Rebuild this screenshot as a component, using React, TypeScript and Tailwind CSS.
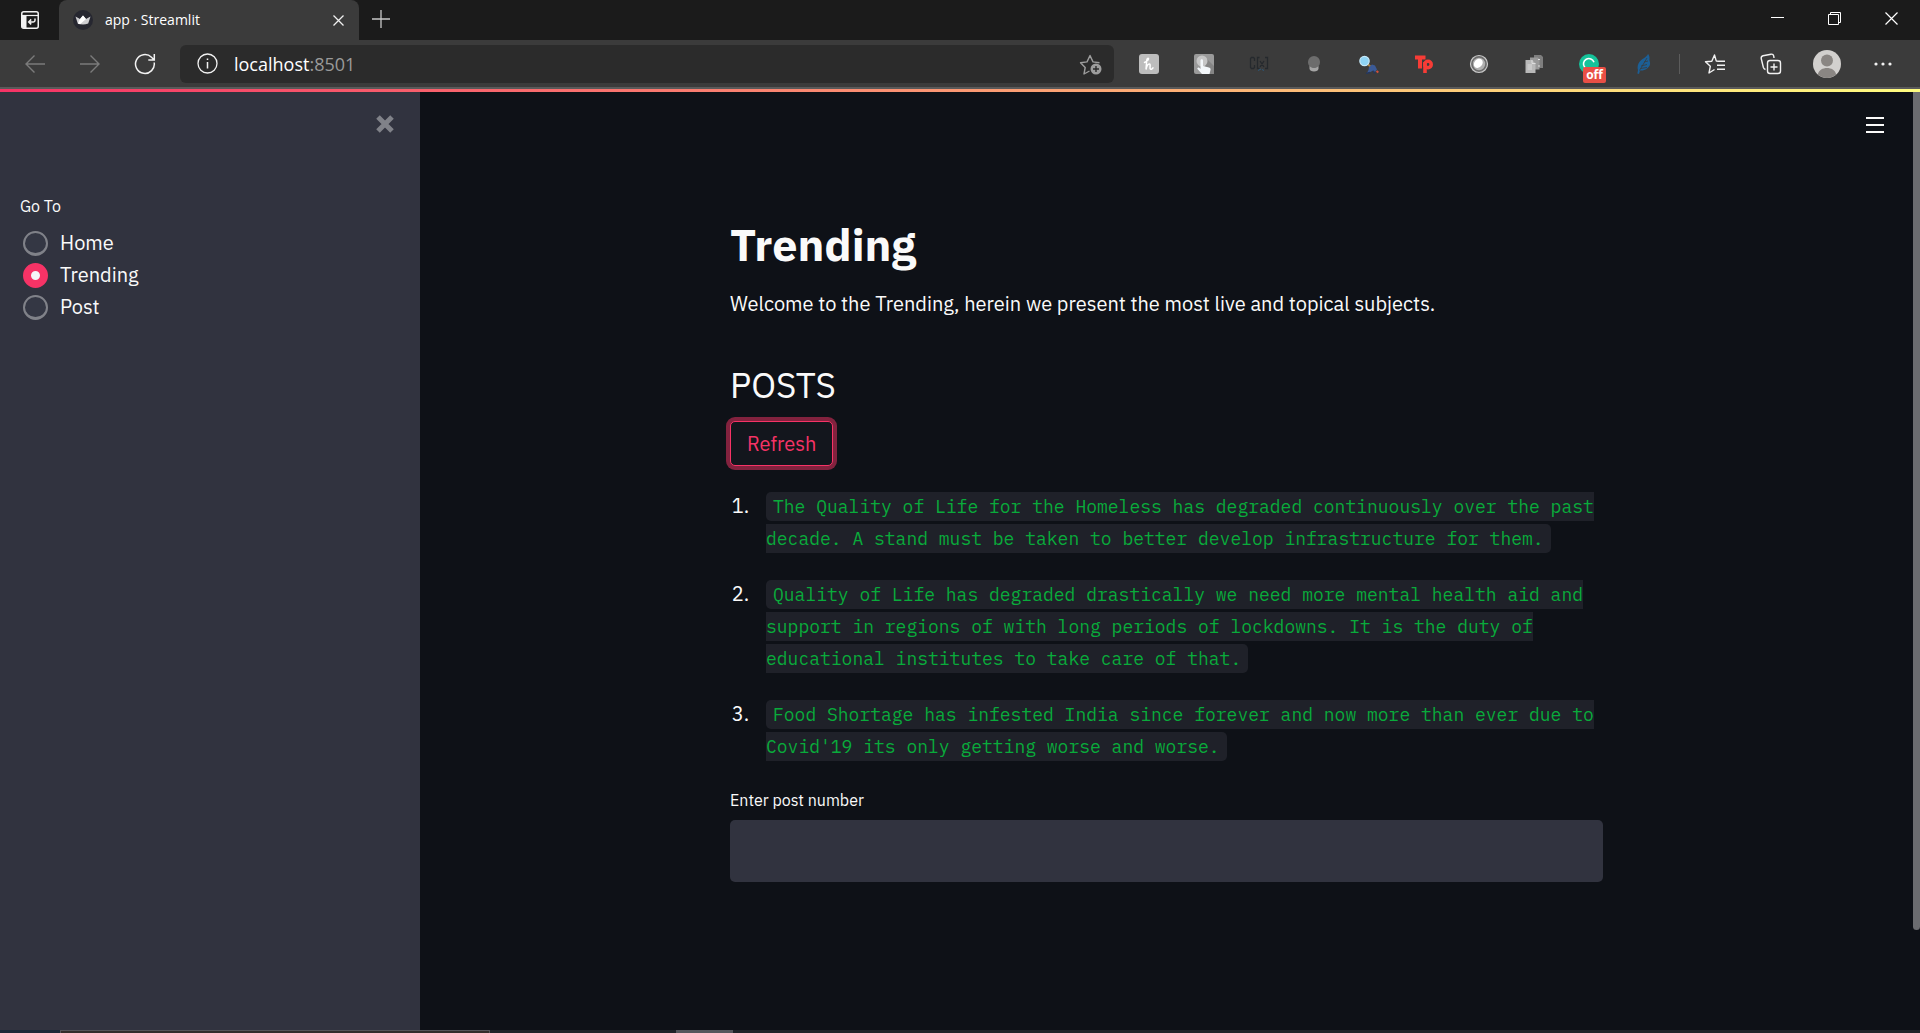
import { useState } from 'react';
import type { ReactNode } from 'react';

const PAGES = ['Home', 'Trending', 'Post'];

const POSTS = [
  'The Quality of Life for the Homeless has degraded continuously over the past decade. A stand must be taken to better develop infrastructure for them.',
  'Quality of Life has degraded drastically we need more mental health aid and support in regions of with long periods of lockdowns. It is the duty of educational institutes to take care of that.',
  "Food Shortage has infested India since forever and now more than ever due to Covid'19 its only getting worse and worse.",
];

function IconButton({ label, className, children }: { label: string; className: string; children: ReactNode }) {
  return (
    <button type="button" aria-label={label} className={`flex shrink-0 items-center justify-center ${className}`}>
      {children}
    </button>
  );
}

function TabBar() {
  return (
    <div className="flex h-10 bg-[#1b1b1b]">
      <IconButton label="Tab actions" className="w-[59px] pb-px">
        <svg width="18" height="18" viewBox="0 0 18 18" fill="none" stroke="#f2f2f2">
          <rect x="0.75" y="0.75" width="16.5" height="16.5" rx="2" strokeWidth="1.5" />
          <path d="M1 4.5h16" strokeWidth="1.2" />
          <path d="M1 5h4.5v12H2.5L1 16z" fill="#f2f2f2" stroke="none" />
          <path d="M14 7.5v1.8c0 1-.6 1.6-1.6 1.6H7.8M10.2 8.4l-2.5 2.5 2.5 2.5" strokeWidth="1.5" />
        </svg>
      </IconButton>

      {/* Active tab */}
      <div className="flex w-[300px] items-center rounded-t-lg bg-[#3b3b3b] pr-[9px] pl-3.5">
        <svg width="20" height="20" viewBox="0 0 20 20">
          <circle cx="10" cy="10" r="10" fill="#262730" />
          <path d="M2.5 6.5L7 9l3-3.5L13 9l4.500-2.500L15.200 13.500Q10 15.500 4.800 13.500z" fill="#cfcfd2" />
          <path d="M10 5.500L13 9l-6 5.200-2.200-.7L7 9z" fill="#fff" />
        </svg>
        <span className="ml-3 flex-1 text-[14px] leading-5 text-white">app · Streamlit</span>
        <IconButton label="Close tab" className="size-6">
          <svg width="11" height="11" viewBox="0 0 11 11" stroke="#f0f0f0" strokeWidth="1.3">
            <path d="M.5.5l10 10M10.500.5l-10 10" />
          </svg>
        </IconButton>
      </div>

      <IconButton label="New tab" className="w-11 pb-0.5">
        <svg width="18" height="18" viewBox="0 0 18 18" stroke="#c8c8c8" strokeWidth="1.3">
          <path d="M9 0v18M0 9h18" />
        </svg>
      </IconButton>

      <div className="ml-auto flex pb-1">
        <IconButton label="Minimize" className="w-[57px]">
          <svg width="13" height="13" viewBox="0 0 13 13" fill="#fff">
            <path d="M0 5h13v1H0z" />
          </svg>
        </IconButton>
        <IconButton label="Restore" className="w-[57px]">
          <svg width="13" height="13" viewBox="0 0 13 13" fill="none" stroke="#fff">
            <path d="M.5 2.5h10v10H.5zM2.5 2.5v-2h10v10h-2" />
          </svg>
        </IconButton>
        <IconButton label="Close window" className="w-[57px]">
          <svg width="13" height="13" viewBox="0 0 13 13" stroke="#fff" strokeWidth="1.2">
            <path d="M.5.5l12 12M12.5.5l-12 12" />
          </svg>
        </IconButton>
      </div>
    </div>
  );
}

function Extensions() {
  const cell = 'w-[55px]';
  return (
    <div className="ml-[7px] flex shrink-0">
      <IconButton label="Honey" className={cell}>
        <svg width="20" height="20" viewBox="0 0 20 20" fill="none" stroke="#fff" strokeLinecap="round">
          <rect width="20" height="20" rx="3" fill="#bdbdbd" stroke="none" />
          <path d="M5.500 8.500c2-1 4.300-2.500 4-4-.4-1-1.600.2-1.800 2L7 15.500c.6-3 1.600-5.500 3.300-5.500 1.700 0 .2 3.500.9 4.900.5.800 1.900.5 2.800-1" strokeWidth="1.500" />
        </svg>
      </IconButton>
      <IconButton label="Pointer" className={cell}>
        <svg width="20" height="20" viewBox="0 0 20 20">
          <rect width="20" height="20" rx="2" fill="#9a9a9a" />
          <path d="M13 5l7 7v8H9z" fill="#858585" />
          <circle cx="8" cy="7" r="5.5" fill="#c6c6c6" />
          <path d="M6.500 6.500c0-1.600 2.500-1.600 2.500 0V12l6 1.500c1.500.4 1.800 1.400 1.500 2.500l-1 4H8l-4.500-5c-.6-1 .7-2 1.700-1.200l1.300 1.200z" fill="#f3f7fa" />
        </svg>
      </IconButton>
      <IconButton label="C[x]" className={cell}>
        <svg width="20" height="16" viewBox="0 0 20 16" fill="none" stroke="#25292d" strokeWidth="1.3">
          <path d="M5.500 5V2.500L4.500 1.500h-2L1.500 2.500v9l1 1h2l1-1V9" />
          <path d="M10.500 1.500h-2v11h2M16 1.500h2.500v11H16M11 5l4 6M15 5l-4 6" />
          <path d="M9 14.500l3-1.500M13 13.500l2 1" stroke="#2d5878" strokeWidth="1" />
        </svg>
      </IconButton>
      <IconButton label="Bulb" className={cell}>
        <svg width="14" height="18" viewBox="0 0 14 18">
          <path d="M2.5 11h9v2.5c0 2-2 3-4.500 3s-4.500-1-4.500-3z" fill="#a5a5a5" />
          <path d="M7 1a6 6 0 0 1 6 6c0 3.500-2.500 6-6 6s-6-2.500-6-6a6 6 0 0 1 6-6z" fill="#6d6d6d" />
        </svg>
      </IconButton>
      <IconButton label="Inspector" className={cell}>
        <svg width="20" height="20" viewBox="0 0 20 20">
          <path d="M8.5 10l3.500 3" stroke="#b0823f" strokeWidth="1.8" />
          <circle cx="5.5" cy="7" r="4.7" fill="#8fd4f5" stroke="#c6e8f7" strokeWidth="1.2" />
          <path d="M10 13l3-2.500 3 1 2 4-2 2.500-2-1.500-2.500 1.500L8 19l1.500-3z" fill="#3b5a96" />
          <path d="M7 19.500l4-1M14 17l2 2.500" stroke="#24375e" strokeWidth="1.3" />
          <path d="M17.500 17l1.800 1.500" stroke="#d3503b" strokeWidth="2" />
        </svg>
      </IconButton>
      <IconButton label="Tp" className={cell}>
        <svg width="20" height="20" viewBox="0 0 20 20" fill="none" stroke="#f73c36">
          <path d="M1 3.500h10.500M6 3v11.500" strokeWidth="4" />
          <path d="M11 19V8" strokeWidth="3.600" />
          <circle cx="14" cy="10.500" r="3.200" strokeWidth="3.600" />
        </svg>
      </IconButton>
      <IconButton label="Lens" className={cell}>
        <svg width="20" height="20" viewBox="0 0 20 20">
          <circle cx="10" cy="10" r="8.500" fill="#6c6c6c" stroke="#c9c9c9" strokeWidth="1.200" />
          <circle cx="10" cy="10" r="6.200" fill="#b0b0b0" />
          <ellipse cx="9.300" cy="9.300" rx="4" ry="5" transform="rotate(40 9.300 9.300)" fill="#fff" />
        </svg>
      </IconButton>
      <IconButton label="Copies" className={cell}>
        <svg width="20" height="20" viewBox="0 0 20 20">
          <path d="M10 1h7l2 2v11h-9z" fill="#7e7e7e" />
          <path d="M6 3.500h8l1.500 2v10H6z" fill="#999" />
          <path d="M1.500 6H8l3.500 3.500V19h-10z" fill="#b8b8b8" />
          <path d="M3.500 10H8v6H3.500z" fill="#c9c9c9" />
          <path d="M8 6v3.500h3.500M14 5.500h2M14 12h2" fill="none" stroke="#dedede" />
        </svg>
      </IconButton>
      <IconButton label="Grammarly" className={`${cell} relative`}>
        <svg width="20" height="20" viewBox="0 0 20 20" fill="none">
          <circle cx="10" cy="10" r="10" fill="#15c39a" />
          <path d="M15 8.200a5.400 5.400 0 1 0-1 5.200" stroke="#fff" strokeWidth="1.600" />
        </svg>
        <span className="absolute top-[13px] left-[22px] h-4 w-[23px] rounded-xs bg-[#e94f45] text-center text-xs leading-4 font-bold text-white">
          off
        </span>
      </IconButton>
      <IconButton label="Feather" className={cell}>
        <svg width="14" height="20" viewBox="0 0 14 20" fill="#1c5f96">
          <path d="M11 0c-.6 3-7.500 5-9.500 9.500C.4 12 .4 14 1 16l-.6 3.500L2 20l1-3.500c5 .5 9-2.500 10-6 .6-2.500-1-3.500-.5-6C12.600 2.500 12 1 11 0z" />
          <path d="M2.500 16.500L10 4M4 12l6-1.500M3.500 14.500l6.500-1M7 8l4-1" stroke="#3b3b3b" strokeWidth=".8" />
        </svg>
      </IconButton>
    </div>
  );
}

function Toolbar() {
  return (
    <div className="flex h-[49px] items-center border-b-2 border-[#5a5a5a] bg-[#3b3b3b] pr-[9px] pl-[7px]">
      <IconButton label="Back" className="h-10 w-[55px]">
        <svg width="20" height="18" viewBox="0 0 20 18" fill="none" stroke="#7b7b7b" strokeWidth="1.4">
          <path d="M20 9H1M9.5.5L1 9l8.500 8.500" />
        </svg>
      </IconButton>
      <IconButton label="Forward" className="h-10 w-[55px]">
        <svg width="20" height="18" viewBox="0 0 20 18" fill="none" stroke="#7b7b7b" strokeWidth="1.4">
          <path d="M0 9h19M10.500.5L19 9l-8.500 8.500" />
        </svg>
      </IconButton>
      <IconButton label="Refresh page" className="h-10 w-[55px]">
        <svg width="22" height="22" viewBox="0 0 22 22" fill="none" stroke="#f2f2f2" strokeWidth="1.5">
          <path d="M20.200 9.500A9.400 9.400 0 1 1 17.500 4.300L20 6.800M20.300 1v6h-6" />
        </svg>
      </IconButton>

      <div className="ml-2 flex h-[38px] flex-1 items-center rounded-md bg-[#2b2b2b] pr-[11px] pl-[17px]">
        <svg width="21" height="21" viewBox="0 0 21 21" fill="none" stroke="#f2f2f2" strokeWidth="1.3">
          <circle cx="10.5" cy="10.5" r="9.5" />
          <path d="M10.5 9v6.500M10.5 5.500v1.600" strokeWidth="1.5" />
        </svg>
        <a href="#top" className="ml-4 flex-1 text-[18px] leading-6 text-white">
          localhost<span className="text-[#9a9a9a]">:8501</span>
        </a>
        <IconButton label="Add to favorites" className="w-6">
          <svg width="24" height="22" viewBox="0 0 24 22" fill="none" stroke="#9d9d9d" strokeWidth="1.4">
            <path d="M10.500 18l-5.500 3 1.200-6.500L1.500 9.800l6.500-.9L11 2.500l3 6.400 6.500.9" strokeLinejoin="round" />
            <circle cx="17" cy="16" r="5.5" fill="#9d9d9d" stroke="none" />
            <path d="M17 13v6M14 16h6" stroke="#2b2b2b" />
          </svg>
        </IconButton>
      </div>

      <Extensions />
      <div className="mr-[7px] ml-2 h-5 w-px bg-[#5c5c5c]" />

      <IconButton label="Favorites" className="h-10 w-14">
        <svg width="22" height="20" viewBox="0 0 22 20" fill="none" stroke="#f2f2f2" strokeWidth="1.4" strokeLinejoin="round">
          <path d="M14.500 7.300l-2.200-.2L10.500 1 7.800 7.200 1.500 7.800l4.800 4.500L5 19l5.500-3.500M13 7.300h8M13 11.300h8M13 15.300h8" />
        </svg>
      </IconButton>
      <IconButton label="Collections" className="h-10 w-[55px]">
        <svg width="22" height="22" viewBox="0 0 22 22" fill="none" stroke="#f2f2f2" strokeWidth="1.4">
          <rect x="7.5" y="7.5" width="13" height="13" rx="2.5" />
          <path d="M14 10.500v7M10.500 14h7M5.500 16.500c-1.200-.3-1.800-1-2.100-2L1.200 5.500C1 4 1.500 3.200 3 2.800L11 1.200c1.500-.2 2.400.4 2.700 1.800l.3 2" />
        </svg>
      </IconButton>
      <IconButton label="Profile" className="h-10 w-[57px]">
        <svg width="28" height="28" viewBox="0 0 28 28">
          <circle cx="14" cy="14" r="14" fill="#d2d0ce" />
          <circle cx="14" cy="10.5" r="6" fill="#8a8683" />
          <path d="M4.800 24.500c1-4.500 5-6.500 9.200-6.500s8.200 2 9.200 6.500a14 14 0 0 1-18.400 0z" fill="#8a8683" />
        </svg>
      </IconButton>
      <IconButton label="Settings and more" className="h-10 w-14">
        <svg width="18" height="4" viewBox="0 0 18 4" fill="#f2f2f2">
          <circle cx="2" cy="2" r="1.6" />
          <circle cx="9" cy="2" r="1.6" />
          <circle cx="16" cy="2" r="1.6" />
        </svg>
      </IconButton>
    </div>
  );
}

function Sidebar() {
  const [page, setPage] = useState('Trending');

  return (
    <aside className="flex w-[420px] shrink-0 flex-col bg-[#31333f] px-5 pt-5">
      <IconButton label="Close sidebar" className="mr-[3px] size-6 self-end">
        <svg width="18" height="18" viewBox="0 0 18 18" stroke="#808289" strokeWidth="5">
          <path d="M2 2l14 14M16 2L2 16" />
        </svg>
      </IconButton>

      <fieldset className="mt-[58px]">
        <legend className="text-[16px] leading-6 text-[#fafafa]">Go To</legend>
        <div className="mt-[9px]">
          {PAGES.map((name) => (
            <label key={name} className="flex h-8 items-center gap-3 pl-[3px] text-[20px] text-[#fafafa]">
              <input
                type="radio"
                name="page"
                value={name}
                checked={page === name}
                onChange={() => setPage(name)}
                className="size-[25px] appearance-none rounded-full border-2 border-b-3 border-[#808289] bg-[#343744] checked:border-8 checked:border-[#f63366] checked:bg-[#f5f5f8]"
              />
              {name}
            </label>
          ))}
        </div>
      </fieldset>
    </aside>
  );
}

function TrendingPage() {
  return (
    <main className="relative flex flex-1 justify-center bg-[#0e1117] px-5 text-[#fafafa]">
      <IconButton label="Menu" className="absolute top-[19px] right-6 size-7">
        <svg width="18" height="16" viewBox="0 0 18 16" fill="#fafafa">
          <path d="M0 0h18v2H0zM0 7h18v2H0zM0 14h18v2H0z" />
        </svg>
      </IconButton>

      <div className="w-full max-w-[873px] pt-[125px] pb-20">
        <h1 className="text-[45px] leading-[55px] font-bold">Trending</h1>
        <p className="mt-4 text-[20px] leading-8">Welcome to the Trending, herein we present the most live and topical subjects.</p>
        <h2 className="mt-11 text-[35px] leading-[42px]">POSTS</h2>
        <button
          type="button"
          className="mt-[15px] block h-[45px] rounded-[5px] border border-[#f63366] bg-[#13161d] px-4 text-[20px] leading-8 text-[#f63366] ring-4 ring-[#f63366]/50"
        >
          Refresh
        </button>

        <ol className="mt-6 list-decimal space-y-6 pl-6 text-[20px] leading-8">
          {POSTS.map((post) => (
            <li key={post} className="pl-3">
              <code className="rounded-[5px] bg-[#1f2129] px-[7px] py-[3px] font-['IBM_Plex_Mono','Liberation_Mono',monospace] text-[18px] leading-6 text-[#09ab3b]">
                {post}
              </code>
            </li>
          ))}
        </ol>

        <label htmlFor="post-number" className="mt-[26px] block text-[16px] leading-6">
          Enter post number
        </label>
        <input
          id="post-number"
          type="text"
          className="mt-2 h-[62px] w-full rounded-[5px] bg-[#31333f] px-4 text-[20px] outline-none"
        />
      </div>
    </main>
  );
}

export default function App() {
  return (
    <div id="top" className="flex min-h-screen flex-col bg-[#0e1117] font-['Open_Sans','Noto_Sans',sans-serif]">
      <header>
        <TabBar />
        <Toolbar />
      </header>
      <div className="h-[3px] bg-linear-to-r/srgb from-[#f63366] to-[#fffd80]" />

      <div className="flex flex-1 font-['IBM_Plex_Sans',Roboto,sans-serif]">
        <Sidebar />
        <TrendingPage />
        {/* Scroll track */}
        <div className="w-[7px] bg-[#0e1117]">
          <div className="h-[838px] rounded-b-full bg-[#6b6c70]" />
        </div>
      </div>

      {/* Top edge of the taskbar */}
      <div className="flex h-[3px] bg-[#1f2328]">
        <div className="w-15 bg-[#1c2838]" />
        <div className="w-[430px] border border-b-0 border-[#555559] bg-[#332e2c]" />
        <div className="ml-[186px] w-[57px] bg-[#55565c]" />
      </div>
    </div>
  );
}
